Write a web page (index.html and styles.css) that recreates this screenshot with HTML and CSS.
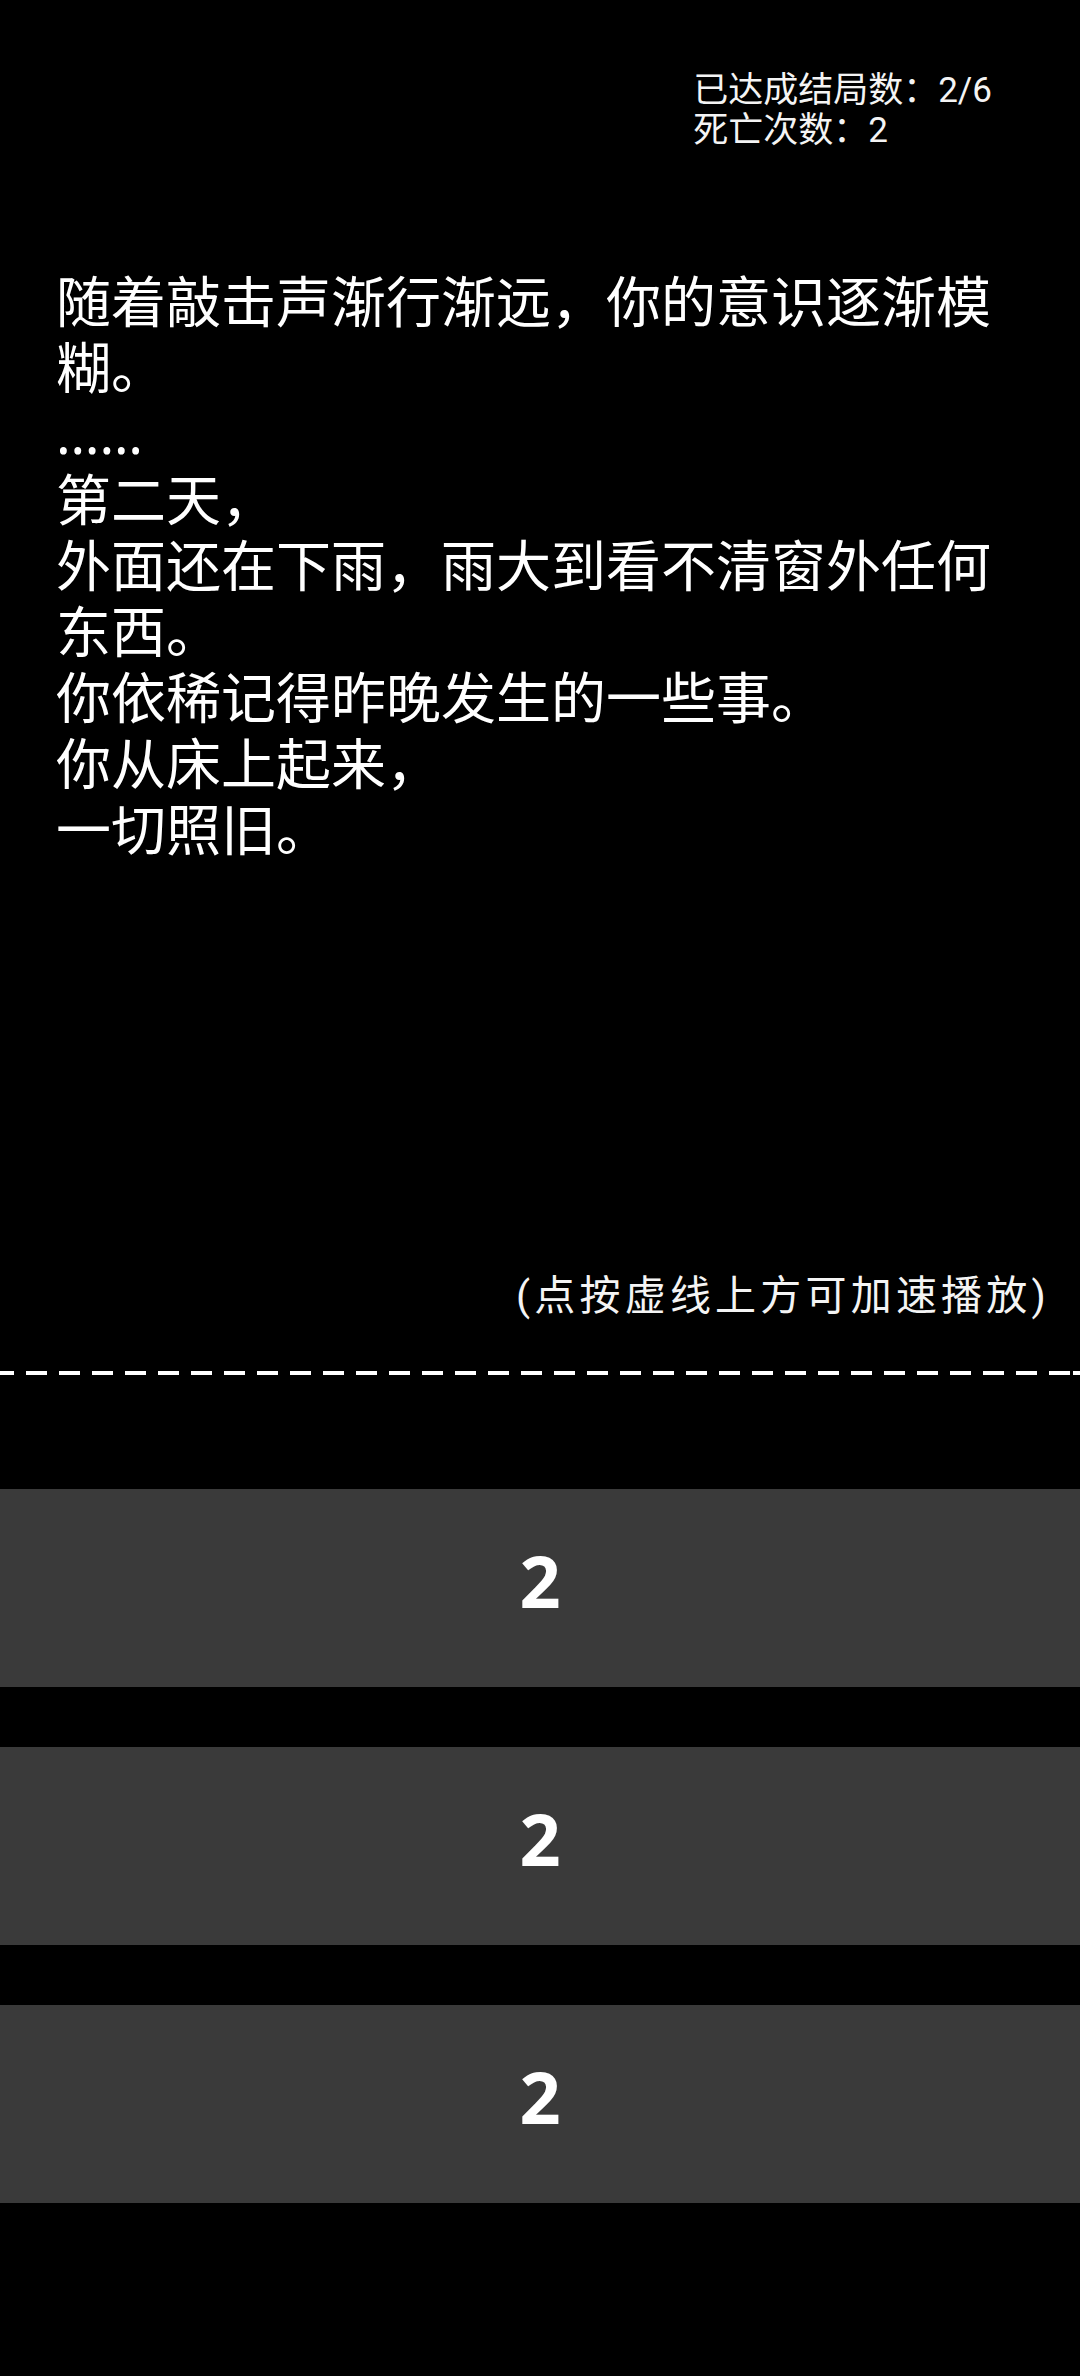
FILE: index.html
```html
<!DOCTYPE html>
<html lang="zh-CN">
<head>
<meta charset="utf-8">
<meta name="viewport" content="width=1080">
<link rel="stylesheet" href="styles.css">
<title>故事</title>
</head>
<body>
<div class="screen">
  <div class="stats">
    <div class="stats-box">
      <div class="stat-line">已达成结局数：2/6</div>
      <div class="stat-line">死亡次数：2</div>
    </div>
  </div>
  <div class="story">
    <p class="story-line">随着敲击声渐行渐远，你的意识逐渐模糊。</p>
    <p class="story-line">……</p>
    <p class="story-line">第二天，</p>
    <p class="story-line">外面还在下雨，雨大到看不清窗外任何东西。</p>
    <p class="story-line">你依稀记得昨晚发生的一些事。</p>
    <p class="story-line">你从床上起来，</p>
    <p class="story-line">一切照旧。</p>
  </div>
  <div class="hint">(点按虚线上方可加速播放)</div>
  <div class="dashline"></div>
  <div class="choices">
    <div class="choice">2</div>
    <div class="choice">2</div>
    <div class="choice">2</div>
  </div>
</div>
</body>
</html>
```
FILE: styles.css
```css
html, body {
  margin: 0;
  padding: 0;
  background: #000;
}
body {
  width: 1080px;
  min-height: 2376px;
  color: #fff;
  font-family: Roboto, "Noto Sans CJK SC", sans-serif;
}
.screen {
  display: flex;
  flex-direction: column;
}
.stats {
  display: flex;
  justify-content: flex-end;
  padding-top: 71px;
  padding-right: 88px;
}
.stats-box {
  font-size: 35px;
  line-height: 40px;
  color: #f4f4f4;
}
.story {
  margin-top: 117px;
  padding: 0 56px;
  font-family: "Noto Sans", "Noto Sans CJK SC", sans-serif;
  font-size: 55px;
  line-height: 66px;
}
.story-line {
  margin: 0;
}
.hint {
  margin-top: 409px;
  padding-right: 30px;
  text-align: right;
  font-size: 41px;
  line-height: 50px;
  letter-spacing: 4.2px;
  color: #f4f4f4;
}
.dashline {
  margin-top: 50px;
  height: 4px;
  background-image: repeating-linear-gradient(to right, #fff 0, #fff 21px, transparent 21px, transparent 33px);
  background-position: -7px 0;
}
.choices {
  margin-top: 114px;
  display: flex;
  flex-direction: column;
  gap: 60px;
}
.choice {
  height: 198px;
  background: #3a3a3a;
  display: flex;
  align-items: center;
  justify-content: center;
  font-family: "Noto Sans", "Noto Sans CJK SC", sans-serif;
  font-weight: 700;
  font-size: 72px;
  line-height: 1;
  padding-bottom: 16px;
  box-sizing: border-box;
}
```
